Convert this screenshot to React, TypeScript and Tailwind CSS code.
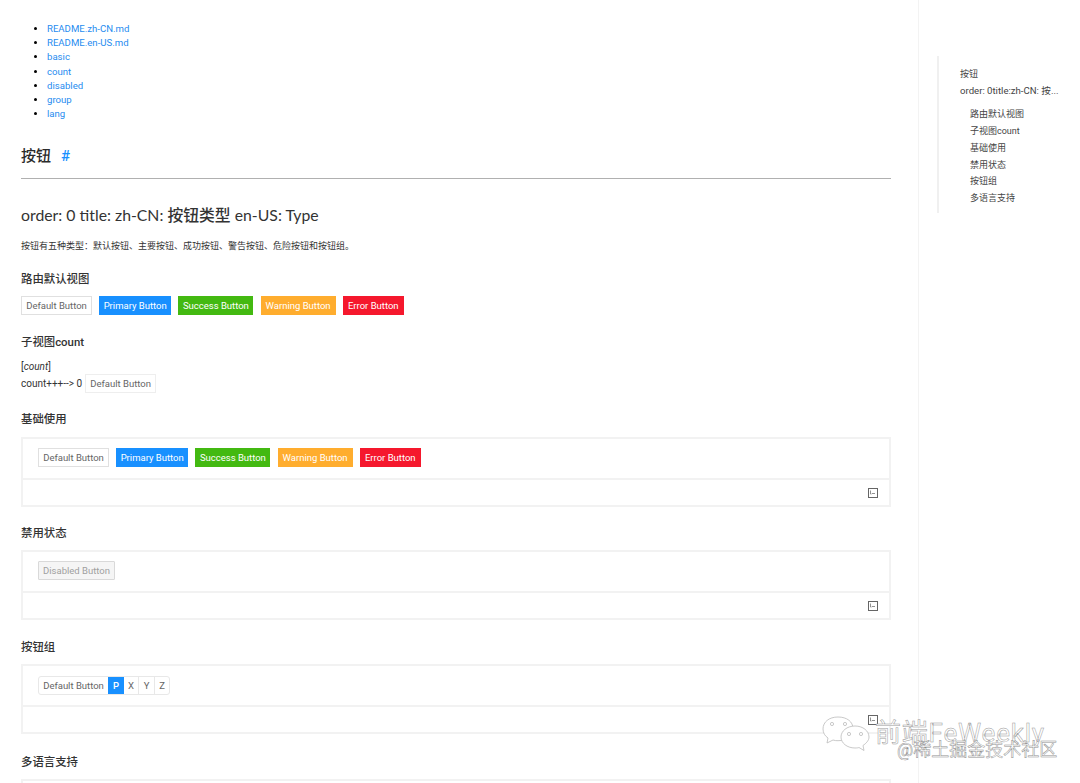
const sans = "font-['Roboto','Noto_Sans_CJK_SC',sans-serif]"

const links = ["README.zh-CN.md", "README.en-US.md", "basic", "count", "disabled", "group", "lang"]

const variants = {
  default: "border-[#e0e0e0] bg-white text-[#666]",
  primary: "border-[#1890ff] bg-[#1890ff] text-white",
  success: "border-[#43b911] bg-[#43b911] text-white",
  warning: "border-[#ffad2e] bg-[#ffad2e] text-white",
  error: "border-[#f5182d] bg-[#f5182d] text-white",
}

function Btn({ kind = "default", children, w }: { kind?: keyof typeof variants; children: string; w: string }) {
  return (
    <button className={`flex h-[19px] items-center justify-center border text-[9.5px] leading-none ${variants[kind]} ${w}`}>
      {children}
    </button>
  )
}

function ButtonRow() {
  return (
    <div className="flex gap-[7.2px]">
      <Btn w="w-[71px]">Default Button</Btn>
      <Btn kind="primary" w="w-[72px]">Primary Button</Btn>
      <Btn kind="success" w="w-[75px]">Success Button</Btn>
      <Btn kind="warning" w="w-[75px]">Warning Button</Btn>
      <Btn kind="error" w="w-[61px]">Error Button</Btn>
    </div>
  )
}

function Heading({ children, className }: { children: string; className: string }) {
  return <h3 className={`text-[11.4px] leading-[16px] font-medium text-[#333] ${className}`}>{children}</h3>
}

function CodeIcon() {
  return (
    <svg width="10" height="10" viewBox="0 0 10 10" fill="none">
      <rect x="0.5" y="0.5" width="9" height="9" stroke="#666" />
      <path d="M2.5 2.5v3.5h1M4 5.5h3" stroke="#777" strokeWidth="0.8" />
    </svg>
  )
}

function DemoBox({ children, className }: { children: React.ReactNode; className: string }) {
  return (
    <div className={`border-2 border-[#f2f2f2] ${className}`}>
      <div className="h-[39px] px-[15px] pt-[9px]">{children}</div>
      <div className="flex h-[27px] items-center justify-end border-t-2 border-[#f2f2f2] pr-[11px]">
        <CodeIcon />
      </div>
    </div>
  )
}

function Toc() {
  const items = ["路由默认视图", "子视图count", "基础使用", "禁用状态", "按钮组", "多语言支持"]
  return (
    <aside className="flex-1 border-l border-[#f3f3f3] pt-[56px] pl-[18px]">
      <nav className="h-[157px] w-[124px] border-l-2 border-[#f0f0f0] pt-[10px] pl-[21px] text-[9px] leading-[16.7px] text-[#444]">
        <div>按钮</div>
        <div className="text-[9.6px] whitespace-nowrap">order: 0title:zh-CN: 按...</div>
        <ul className="mt-[7px] pl-[10px]">
          {items.map((item) => (
            <li key={item}>{item}</li>
          ))}
        </ul>
      </nav>
    </aside>
  )
}

function Watermark() {
  return (
    <div className="pointer-events-none absolute top-[712px] left-[822px] h-[71px] w-[258px]">
      <svg className="absolute top-[4px] left-0" width="50" height="36" viewBox="0 0 50 36" fill="#fff" stroke="#bbb" strokeWidth="0.8">
        <path d="M16 1C7 1 1 6 1 13c0 4 2 7 5 9l-1 5 6-3c2 .6 3 .7 5 .7 9 0 15-5 15-12S25 1 16 1z" />
        <path d="M33 10c-8 0-14 5-14 11s6 11 14 11c2 0 3-.2 4-.5l5 3-1-5c3-2 6-5 6-8.500 0-6-6-11-14-11z" />
        <circle cx="10" cy="8" r="1.600" />
        <circle cx="23" cy="8" r="1.600" />
        <circle cx="27" cy="18" r="1.600" />
        <circle cx="39" cy="18" r="1.600" />
      </svg>
      <span className="absolute top-[7px] left-[53px] text-[26px] leading-[28px] tracking-[0.8px] whitespace-nowrap text-white [-webkit-text-stroke:0.5px_#9a9a9a]">
        前端FeWeekly
      </span>
      <span className="absolute top-[28px] left-[75px] text-[18px] leading-[20px] whitespace-nowrap text-white [-webkit-text-stroke:0.5px_#8f8f8f]">
        @稀土掘金技术社区
      </span>
    </div>
  )
}

export default function App() {
  return (
    <div className={`relative flex h-[783px] w-[1080px] overflow-hidden bg-white ${sans}`}>
      <main className="w-[918px] shrink-0 pr-[27px] pl-[21px] text-[#333]">
        <ul className="list-disc pt-[22px] pl-[26px] text-[9.6px] leading-[14.17px] text-[#1f8cf0] marker:text-black">
          {links.map((l) => (
            <li key={l}>{l}</li>
          ))}
        </ul>
        <h1 className="mt-[24px] flex h-[22px] items-center text-[15px] font-medium text-[#2b2b2b]">
          按钮
          <span className="ml-[10px] text-[#1890ff]">#</span>
        </h1>
        <hr className="mt-[11px] border-[#b0b0b0]" />
        <h2 className="mt-[25px] font-['Lato','Noto_Sans_CJK_SC',sans-serif] text-[15.8px] leading-[22px] text-[#333]">
          order: 0 title: zh-CN: <span className="font-medium">按钮类型</span> en-US: Type
        </h2>
        <p className="mt-[13px] text-[9px] leading-[14px] text-[#333]">
          按钮有五种类型：默认按钮、主要按钮、成功按钮、警告按钮、危险按钮和按钮组。
        </p>
        <Heading className="mt-[18px]">路由默认视图</Heading>
        <div className="mt-[9px]">
          <ButtonRow />
        </div>
        <Heading className="mt-[19px]">子视图count</Heading>
        <p className="mt-[10px] text-[10px] leading-[14px] text-[#333]">
          [<em>count</em>]
        </p>
        <div className="flex items-center gap-[3px] text-[10px] text-[#333]">
          count+++--&gt; 0
          <button className="flex h-[19px] w-[71px] items-center justify-center border border-[#eeeeee] text-[9.5px] text-[#666]">
            Default Button
          </button>
        </div>
        <Heading className="mt-[18px]">基础使用</Heading>
        <DemoBox className="mt-[10px]">
          <ButtonRow />
        </DemoBox>
        <Heading className="mt-[18px]">禁用状态</Heading>
        <DemoBox className="mt-[9px]">
          <button className="flex h-[19px] w-[77px] items-center justify-center rounded-[1px] border border-[#d9d9d9] bg-[#f5f5f5] text-[9.5px] text-[#a0a0a0]">
            Disabled Button
          </button>
        </DemoBox>
        <Heading className="mt-[19px]">按钮组</Heading>
        <DemoBox className="mt-[9px]">
          <div className="mt-[1px] flex h-[19px] w-[132px] items-stretch rounded-[3px] border border-[#e8e8e8] text-[9.5px] text-[#666]">
            <span className="flex w-[69px] items-center justify-center">Default Button</span>
            <span className="flex w-[16px] items-center justify-center bg-[#1890ff] font-medium text-white">P</span>
            <span className="flex w-[15px] items-center justify-center border-r border-[#e8e8e8]">X</span>
            <span className="flex w-[16px] items-center justify-center border-r border-[#e8e8e8]">Y</span>
            <span className="flex flex-1 items-center justify-center">Z</span>
          </div>
        </DemoBox>
        <Heading className="mt-[20px]">多语言支持</Heading>
        <div className="mt-[9px] h-[20px] border-2 border-[#f2f2f2]" />
      </main>
      <Toc />
      <Watermark />
    </div>
  )
}
